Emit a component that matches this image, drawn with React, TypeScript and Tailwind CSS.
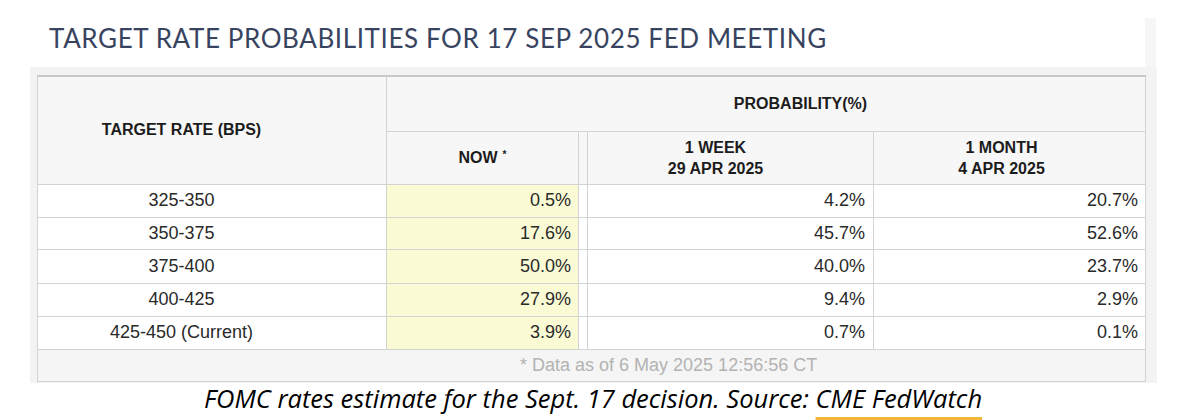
export default function App() {
  const rows: string[][] = [
    ["325-350", "0.5%", "4.2%", "20.7%"],
    ["350-375", "17.6%", "45.7%", "52.6%"],
    ["375-400", "50.0%", "40.0%", "23.7%"],
    ["400-425", "27.9%", "9.4%", "2.9%"],
    ["425-450 (Current)", "3.9%", "0.7%", "0.1%"],
  ];
  const rowH = ["h-[33px]", "h-[32px]", "h-[34px]", "h-[33px]", "h-[33px]"];
  return (
    <div className="w-[1194px] h-[420px] bg-white overflow-hidden">
      <div className="flex pt-[18px] h-[67px]">
        <div className="w-[1145px] bg-white pl-[49px] pt-[5px]">
          <h1 className="font-['Lato','Open_Sans',sans-serif] text-[26px] leading-[30px] font-normal text-[#38445f] tracking-[0.6px]">
            TARGET RATE PROBABILITIES FOR 17 SEP 2025 FED MEETING
          </h1>
        </div>
        <div className="w-[11px] bg-[#f6f6f6]" />
      </div>
      <div className="ml-[30px] w-[1127px] bg-[#f3f3f3] pt-[8px] pl-[7px] pr-[12px] pb-px">
        <table className="table-fixed border-collapse w-[1108px] font-['Liberation_Sans',Arial,sans-serif] text-[#2a2a2a]">
          <colgroup>
            <col className="w-[349px]" />
            <col className="w-[192px]" />
            <col className="w-[9px]" />
            <col className="w-[286px]" />
            <col className="w-[272px]" />
          </colgroup>
          <thead>
            <tr className="h-[55px]">
              <th
                rowSpan={2}
                className="border border-[#d3d3d3] border-t-2 border-t-[#c8c8c8] bg-[#f7f7f7] pr-[61px] text-center text-[16px] font-bold text-[#1c1c1c]"
              >
                TARGET RATE (BPS)
              </th>
              <th
                colSpan={4}
                className="border border-[#d3d3d3] border-t-2 border-t-[#c8c8c8] bg-[#f7f7f7] pl-[69px] text-center text-[16px] font-bold text-[#1c1c1c]"
              >
                PROBABILITY(%)
              </th>
            </tr>
            <tr className="h-[53px]">
              <th className="border border-[#d3d3d3] bg-[#f7f7f7] text-center text-[16px] font-bold text-[#1c1c1c]">
                NOW<sup className="text-[10px] ml-[5px]">*</sup>
              </th>
              <th className="border border-[#d3d3d3] bg-[#f7f7f7]" />
              <th className="border border-[#d3d3d3] bg-[#f7f7f7] pr-[30px] text-center text-[16px] leading-[21px] font-bold text-[#1c1c1c]">
                1 WEEK
                <br />
                29 APR 2025
              </th>
              <th className="border border-[#d3d3d3] bg-[#f7f7f7] pr-[16px] text-center text-[16px] leading-[21px] font-bold text-[#1c1c1c]">
                1 MONTH
                <br />
                4 APR 2025
              </th>
            </tr>
          </thead>
          <tbody>
            {rows.map((r, i) => (
              <tr key={r[0]} className={rowH[i]}>
                <td className="border border-[#d3d3d3] bg-white pr-[61px] text-center text-[18px]">{r[0]}</td>
                <td className="border border-[#d3d3d3] bg-[#fafad5] pr-[7px] text-right text-[18px]">{r[1]}</td>
                <td className="border border-[#d3d3d3] bg-white" />
                <td className="border border-[#d3d3d3] bg-white pr-[8px] text-right text-[18px]">{r[2]}</td>
                <td className="border border-[#d3d3d3] bg-white pr-[7px] text-right text-[18px]">{r[3]}</td>
              </tr>
            ))}
            <tr className="h-[32px]">
              <td
                colSpan={5}
                className="border border-[#d3d3d3] bg-[#f5f5f5] pl-[482px] text-left text-[18px] text-[#b3b3b3]"
              >
                * Data as of 6 May 2025 12:56:56 CT
              </td>
            </tr>
          </tbody>
        </table>
      </div>
      <p className="pt-[1px] pr-[8px] text-center font-['Open_Sans',sans-serif] italic text-[25.5px] leading-[29px] text-black">
        FOMC rates estimate for the Sept. 17 decision. Source:{" "}
        <span className="underline decoration-[#f1b63a] decoration-[5px] underline-offset-[9px]">CME FedWatch</span>
      </p>
    </div>
  );
}
